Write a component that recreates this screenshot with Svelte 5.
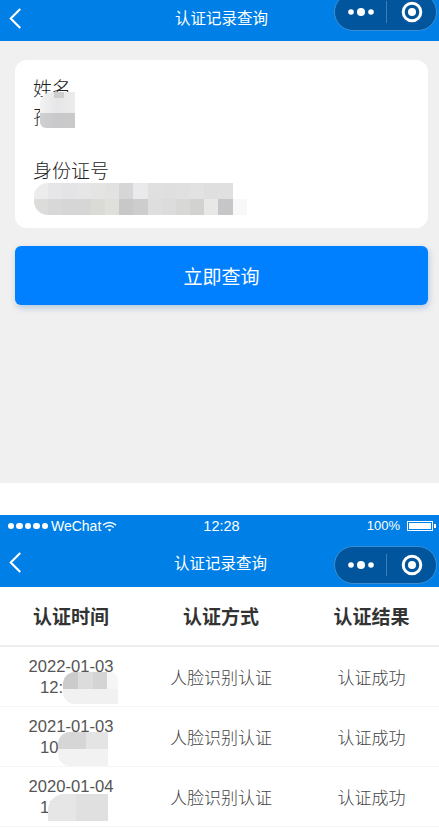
<script>
  const g = ['#ececec','#e6e6e8','#e4e4e6','#e6e6e6','#e4e4e2','#e2e2e2','#d6d6d6','#eaeaec','#e0e0e0','#dfdfdf','#e0e0e0','#e2e2e2','#dfdfdf','#e0e0e0','#ffffff'];
  const h = ['#dcdcda','#d8d8d8','#d6d6d6','#d6d6d6','#dadad6','#e0e0da','#c8c8c8','#cdcdcd','#dedede','#dcdcdc','#d8d8d6','#d2d2d0','#e8e8e6','#c6c6c8','#f8f8f8'];
  const rows = [
    { date: '2022-01-03', time: '12:', cls: 'm1' },
    { date: '2021-01-03', time: '10:', cls: 'm2' },
    { date: '2020-01-04', time: '15:', cls: 'm3' }
  ];
</script>

{#snippet capsule()}
  <div class="capsule">
    <svg class="dots" viewBox="0 0 28 10" aria-hidden="true">
      <circle cx="4" cy="5" r="2.8" fill="#fff"/>
      <circle cx="14" cy="5" r="4" fill="#fff"/>
      <circle cx="24" cy="5" r="2.8" fill="#fff"/>
    </svg>
    <span class="sep"></span>
    <svg class="target" viewBox="0 0 24 24" aria-hidden="true">
      <circle cx="12" cy="12" r="8.8" fill="none" stroke="#fff" stroke-width="3"/>
      <circle cx="12" cy="12" r="4" fill="#fff"/>
    </svg>
  </div>
{/snippet}

{#snippet back()}
  <svg class="back" viewBox="0 0 14 22" aria-hidden="true">
    <path d="M12.5 1 L2.5 11 L12.5 21" fill="none" stroke="#fff" stroke-width="2.2"/>
  </svg>
{/snippet}

<div class="page">
  <section class="top">
    <header class="nav nav-clip">
      {@render back()}
      <div class="title">认证记录查询</div>
      {@render capsule()}
    </header>
    <div class="content">
      <div class="card">
        <div class="label">姓名</div>
        <div class="value">孙</div>
        <div class="label second">身份证号</div>
        <div class="value id">&nbsp;</div>
        <div class="mask name">
          <div class="nm-a"></div><div class="nm-b"></div>
        </div>
        <div class="mask idmask">
          <div class="row">{#each g as c}<i style:background={c}></i>{/each}</div>
          <div class="row">{#each h as c}<i style:background={c}></i>{/each}</div>
        </div>
      </div>
      <button class="query">立即查询</button>
    </div>
  </section>

  <div class="gap"></div>

  <section class="bottom">
    <div class="status">
      <div class="st-left">
        <span class="sig"><b></b><b></b><b></b><b></b><b></b></span>
        <span>WeChat</span>
        <svg class="wifi" viewBox="0 0 16 11" aria-hidden="true">
          <path d="M1 4 Q8 -1.5 15 4 M3.5 6.5 Q8 3 12.5 6.5" fill="none" stroke="#fff" stroke-width="1.5"/>
          <path d="M6 8.8 Q8 7.4 10 8.8 L8 10.8 Z" fill="#fff"/>
        </svg>
      </div>
      <div class="st-time">12:28</div>
      <div class="st-right">
        <span>100%</span>
        <span class="batt"><span></span></span>
      </div>
    </div>
    <header class="nav nav-full">
      {@render back()}
      <div class="title">认证记录查询</div>
      {@render capsule()}
    </header>
    <div class="thead">
      <div>认证时间</div>
      <div>认证方式</div>
      <div class="c3">认证结果</div>
    </div>
    {#each rows as r}
      <div class="tr">
        <div class="when">
          <span>{r.date}</span>
          <span class="clock">{r.time}</span>
          <div class="mask {r.cls}"></div>
        </div>
        <div>人脸识别认证</div>
        <div class="c3">认证成功</div>
      </div>
    {/each}
  </section>
</div>

<style>
  :global(body) {
    margin: 0;
    background: #fff;
  }
  .page {
    width: 439px;
    height: 828px;
    overflow: hidden;
    font-family: "Noto Sans CJK SC", "Liberation Sans", sans-serif;
    color: #333;
  }
  .top {
    height: 483px;
    background: #f0f0f0;
  }
  .gap {
    height: 32px;
    background: #fff;
  }
  .nav {
    display: flex;
    align-items: center;
    position: relative;
    background: #0080e6;
    color: #fff;
    overflow: hidden;
  }
  .nav-clip {
    height: 41px;
  }
  .nav-full {
    height: 50px;
  }
  .back {
    width: 14px;
    height: 21px;
    margin-left: 8px;
    flex: none;
  }
  .nav-clip .back {
    margin-top: -5px;
  }
  .title {
    position: absolute;
    left: 175px;
    font-size: 15.5px;
    line-height: 20px;
    white-space: nowrap;
    font-weight: 400;
  }
  .nav-clip .title {
    top: 7px;
  }
  .nav-full .title {
    left: 174px;
    top: 15px;
  }
  .capsule {
    position: absolute;
    right: 2px;
    width: 103px;
    height: 38px;
    box-sizing: border-box;
    display: flex;
    align-items: center;
    border-radius: 19px;
    background: #00559c;
    border: 1px solid #3a8fd2;
  }
  .nav-clip .capsule {
    top: -7px;
  }
  .nav-full .capsule {
    top: 9px;
  }
  .dots {
    width: 28px;
    height: 10px;
    margin-left: 12px;
  }
  .sep {
    width: 1px;
    height: 22px;
    margin-left: 11px;
    background: #3a7fb8;
  }
  .target {
    width: 24px;
    height: 24px;
    margin-left: 13px;
  }
  .content {
    padding: 19px 11px 0 15px;
  }
  .card {
    position: relative;
    height: 168px;
    box-sizing: border-box;
    padding: 14px 18px;
    background: #fff;
    border-radius: 12px;
  }
  .label,
  .value {
    font-size: 19px;
    line-height: 28px;
    font-weight: 300;
    color: #222;
  }
  .second {
    margin-top: 26px;
  }
  .mask {
    position: absolute;
    overflow: hidden;
  }
  .name {
    left: 25px;
    top: 32px;
    width: 35px;
    height: 36px;
    border-radius: 12px 0 0 6px;
    filter: blur(0.5px);
  }
  .nm-a {
    height: 21px;
    background:
      linear-gradient(180deg, #cdcdcd 0 6px, transparent 6px) 14px 0 / 10px 100% no-repeat,
      linear-gradient(90deg, #f2f2f2, #e6e6e8 50%, #ececec);
  }
  .nm-b {
    height: 15px;
    background: linear-gradient(90deg, #d0d0d2, #c8c8cc 50%, #cacaca);
  }
  .idmask {
    left: 19px;
    top: 123px;
    border-radius: 14px 0 0 14px;
    filter: blur(0.6px);
  }
  .row {
    display: flex;
    height: 16px;
  }
  .row i {
    display: block;
    width: 14.2px;
    flex: none;
  }
  .query {
    display: block;
    width: 413px;
    height: 59px;
    margin: 18px 0 0;
    padding: 0;
    border: 0;
    border-radius: 6px;
    background: #0080ff;
    color: #fff;
    font: 400 19px/59px "Noto Sans CJK SC", sans-serif;
    box-shadow: 1px 3px 6px rgba(0, 90, 180, 0.25);
  }
  .status {
    height: 22px;
    padding: 0 2px 0 8px;
    display: grid;
    grid-template-columns: 1fr 1fr 1fr;
    align-items: center;
    background: #0080e6;
    color: #fff;
    font: 14px/20px "Liberation Sans", sans-serif;
  }
  .st-left {
    display: flex;
    align-items: center;
    white-space: nowrap;
  }
  .sig {
    display: flex;
    gap: 2px;
    margin-right: 3px;
  }
  .sig b {
    width: 6.4px;
    height: 6.4px;
    border-radius: 50%;
    background: #fff;
  }
  .wifi {
    width: 15px;
    height: 11px;
    margin-left: 1px;
  }
  .st-time {
    text-align: center;
    font-size: 14.5px;
    margin-left: -2px;
  }
  .st-right {
    display: flex;
    justify-content: flex-end;
    align-items: center;
    gap: 7px;
    font-size: 13px;
  }
  .batt {
    position: relative;
    width: 26px;
    height: 10px;
    box-sizing: border-box;
    border: 1px solid #fff;
    padding: 1px;
    margin-right: 4px;
  }
  .batt span {
    display: block;
    height: 100%;
    background: #fff;
  }
  .batt::after {
    content: "";
    position: absolute;
    right: -4px;
    top: 2px;
    width: 2px;
    height: 4px;
    background: #fff;
  }
  .thead,
  .tr {
    display: grid;
    grid-template-columns: 142px 158px 1fr;
    text-align: center;
    align-items: center;
  }
  .c3 {
    padding-left: 4px;
  }
  .thead {
    height: 60px;
    font-size: 19px;
    font-weight: 700;
    color: #333;
    border-bottom: 2px solid #eee;
    box-sizing: border-box;
    padding-bottom: 2px;
  }
  .tr {
    height: 60px;
    font-size: 17px;
    font-weight: 300;
    color: #444;
    border-bottom: 1px solid #f6f6f6;
    box-sizing: border-box;
  }
  .when {
    position: relative;
    display: flex;
    flex-direction: column;
    align-items: center;
    font: 16.6px/21px "Liberation Sans", sans-serif;
    color: #555;
  }
  .clock {
    align-self: flex-start;
    margin-left: 40px;
  }
  .m1 {
    left: 63px;
    top: 16px;
    width: 55px;
    height: 32px;
    border-radius: 12px 8px 0 12px;
    background:
      linear-gradient(90deg, #cbcbcb 0 15px, #dcdcdc 15px 30px, #d4d4d4 30px 44px, #f6f6f6 44px) top / 100% 17px no-repeat,
      #f1f1f1;
  }
  .m2 {
    left: 58px;
    top: 16px;
    width: 50px;
    height: 34px;
    border-radius: 12px 0 0 12px;
    background:
      linear-gradient(90deg, #d6d6d6 0 28px, #e4e4e4 28px) top / 100% 17px no-repeat,
      #f2f2f2;
  }
  .m3 {
    left: 48px;
    top: 18px;
    width: 60px;
    height: 27px;
    border-radius: 16px 0 0 0;
    background: linear-gradient(90deg, #e6e6e6 0 28px, #e0e0e0 28px);
  }
</style>
